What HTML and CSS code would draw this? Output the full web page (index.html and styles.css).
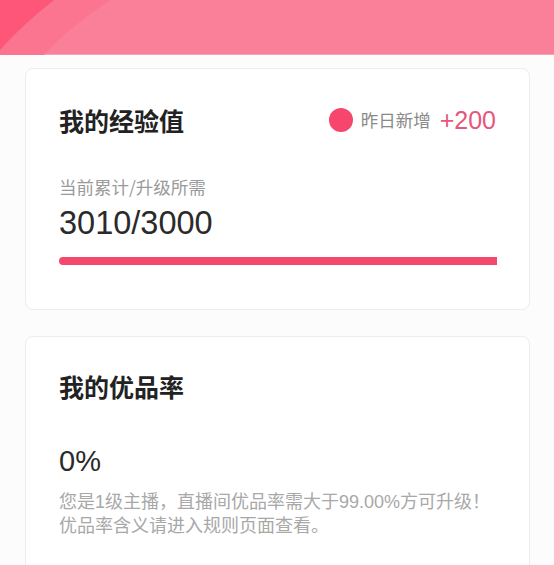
FILE: index.html
```html
<!DOCTYPE html>
<html lang="zh-CN">
<head>
<meta charset="utf-8">
<title>我的经验值</title>
<link rel="stylesheet" href="styles.css">
</head>
<body>
<header class="hero">
  <svg class="hero-art" width="554" height="55" viewBox="0 0 554 55" preserveAspectRatio="none">
    <path d="M0 0 H110 C90 14 62 34 44 55 H0 Z" fill="#fb7590"/>
    <path d="M0 0 H54 C36 14 16 32 0 50 Z" fill="#fe5678"/>
  </svg>
</header>
<main class="content">
  <section class="card">
    <div class="card-head">
      <h2 class="card-title">我的经验值</h2>
      <div class="daily">
        <span class="dot"></span>
        <span class="daily-label">昨日新增</span>
        <span class="daily-value">+200</span>
      </div>
    </div>
    <div class="label">当前累计/升级所需</div>
    <div class="big-num">3010/3000</div>
    <div class="bar"><div class="bar-fill" style="width:100%"></div></div>
  </section>
  <section class="card card-second">
    <h2 class="card-title">我的优品率</h2>
    <div class="rate">0%</div>
    <p class="desc">您是1级主播，直播间优品率需大于99.00%方可升级！<br>优品率含义请进入规则页面查看。</p>
  </section>
</main>
</body>
</html>
```
FILE: styles.css
```css
html, body {
  margin: 0;
  padding: 0;
}
body {
  background: #fcfcfc;
  font-family: "Liberation Sans", "Noto Sans CJK SC", sans-serif;
  color: #333;
  width: 554px;
  height: 565px;
  overflow: hidden;
}
.hero {
  height: 55px;
  background: #f98098;
  position: relative;
  border-bottom: 1px solid #f4a4b5;
  box-sizing: border-box;
}
.hero-art {
  position: absolute;
  left: 0;
  top: 0;
  display: block;
}
.content {
  padding: 13px 24px 0 25px;
  display: flex;
  flex-direction: column;
  gap: 26px;
}
.card {
  background: #fff;
  border: 1px solid #ececec;
  border-radius: 8px;
  padding: 34px 32px 44px 33px;
  display: flex;
  flex-direction: column;
}
.card-head {
  display: flex;
  align-items: center;
  justify-content: space-between;
}
.card-title {
  margin: 0;
  font-family: "Noto Sans CJK SC", sans-serif;
  font-size: 25px;
  line-height: 34px;
  font-weight: 700;
  color: #222;
}
.daily {
  display: flex;
  align-items: center;
}
.dot {
  width: 24px;
  height: 24px;
  border-radius: 50%;
  background: #f6466b;
  margin-right: 8px;
}
.daily-label {
  font-family: "Noto Sans CJK SC", sans-serif;
  font-size: 17.5px;
  line-height: 24px;
  color: #8a8a8a;
  margin-right: 9px;
}
.daily-value {
  font-size: 25px;
  line-height: 30px;
  color: #e5577b;
  margin-right: 1px;
}
.label {
  margin-top: 38px;
  font-family: "Noto Sans CJK SC", sans-serif;
  font-size: 17.5px;
  line-height: 24px;
  color: #9a9a9a;
}
.big-num {
  margin-top: 4px;
  font-size: 32.5px;
  line-height: 40px;
  color: #2a2a2a;
}
.bar {
  margin-top: 14px;
  height: 8px;
  background: #f3f3f3;
  border-radius: 4px 0 0 4px;
  overflow: hidden;
}
.bar-fill {
  height: 100%;
  background: #f5486d;
}
.card-second {
  padding-top: 32px;
  padding-bottom: 40px;
}
.rate {
  margin-top: 40px;
  font-size: 29px;
  line-height: 36px;
  color: #2a2a2a;
}
.desc {
  margin: 12px 0 0;
  font-family: "Liberation Sans", "Noto Sans CJK SC", sans-serif;
  font-size: 18px;
  line-height: 23.5px;
  color: #a8a8a8;
}
```
